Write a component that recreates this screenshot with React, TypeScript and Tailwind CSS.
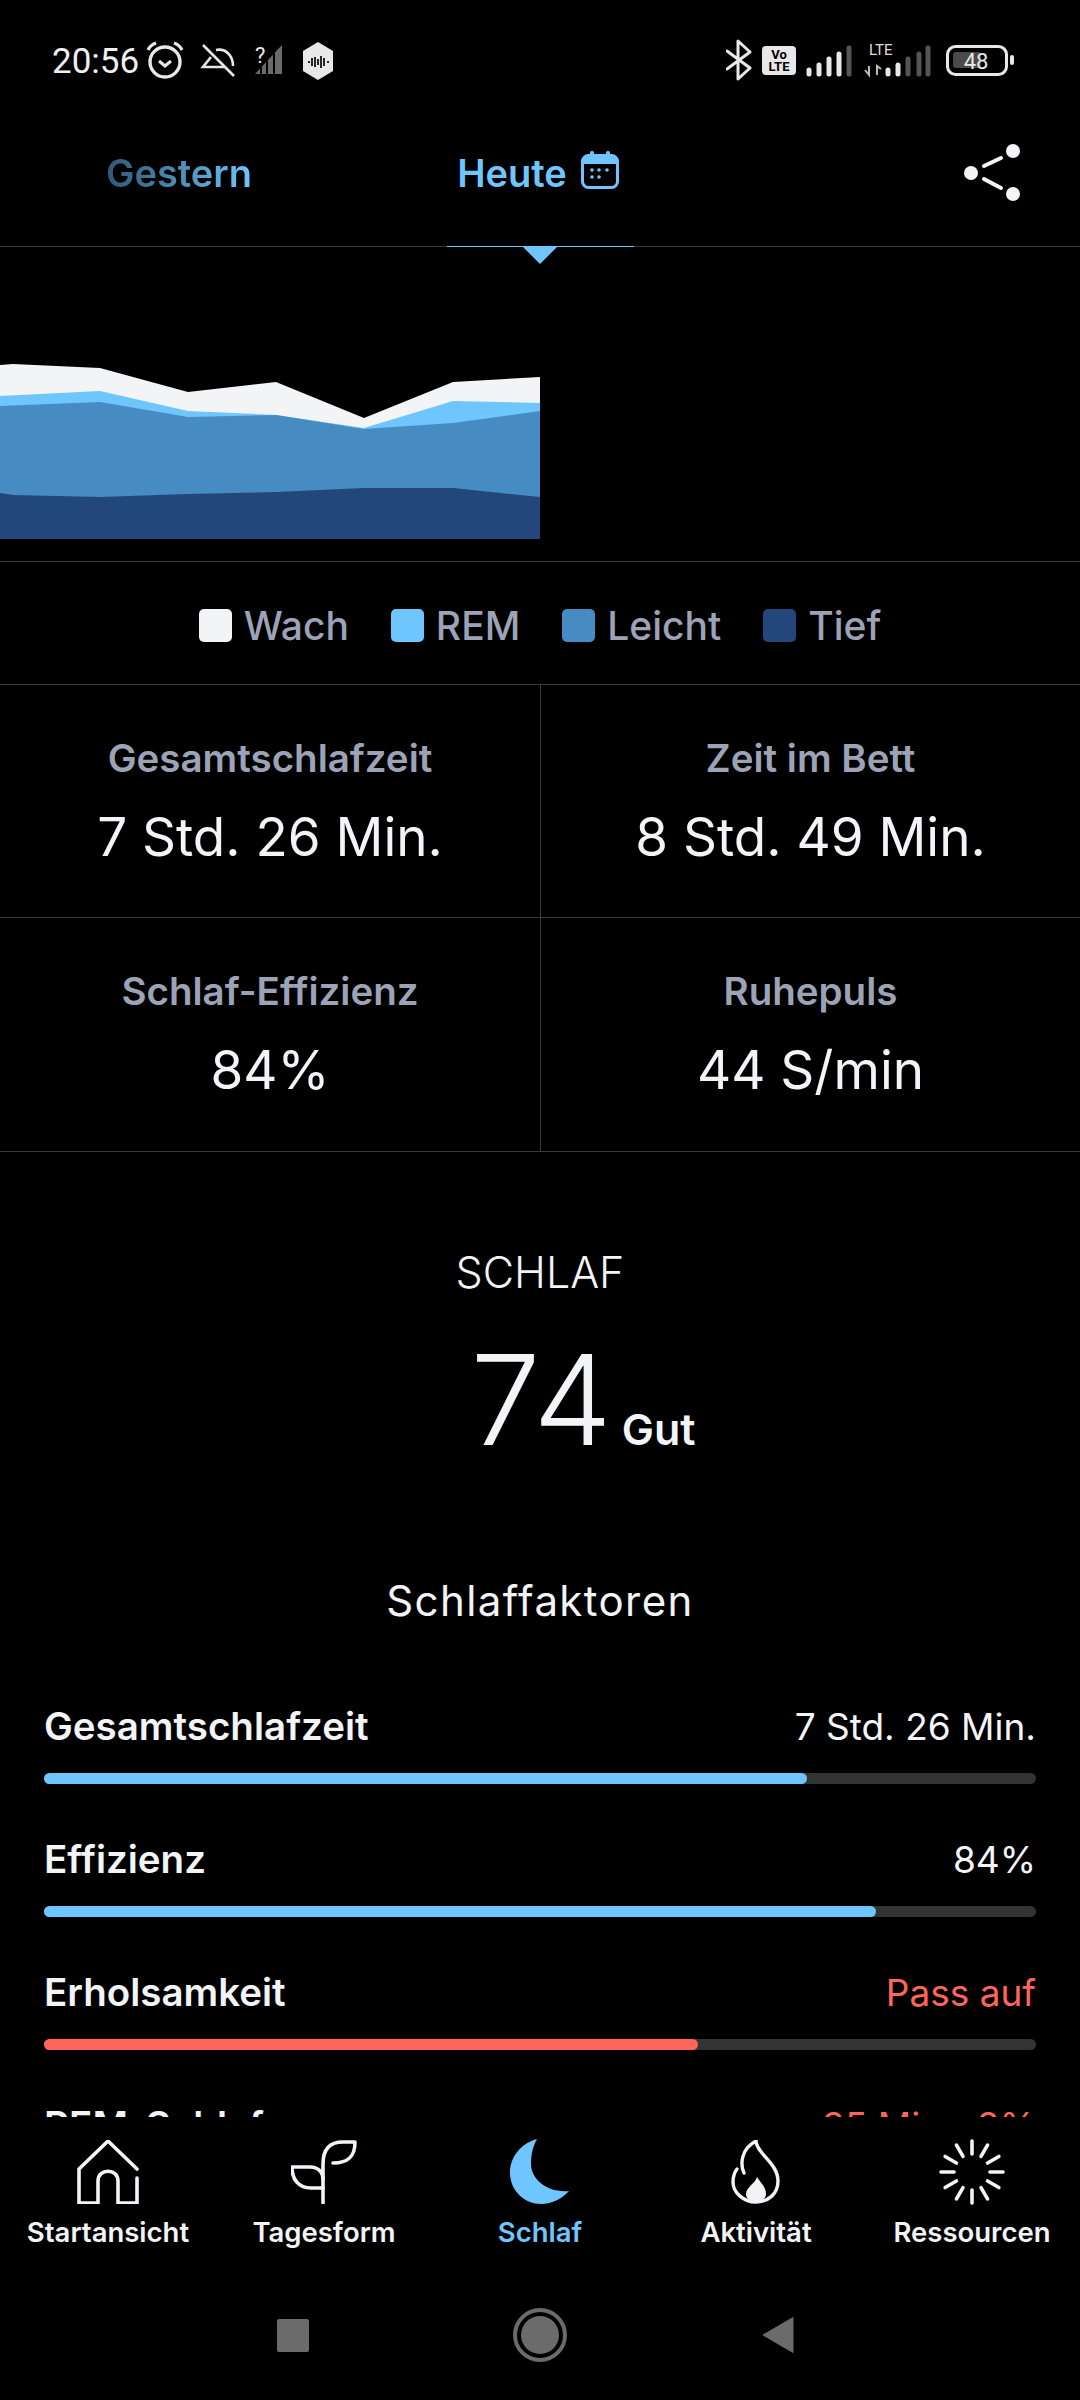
const FONT = "font-['Inter','Liberation_Sans',sans-serif]";

const FACTORS = [
  { label: "Gesamtschlafzeit", value: "7 Std. 26 Min.", fill: 763, bad: false },
  { label: "Effizienz", value: "84%", fill: 832, bad: false },
  { label: "Erholsamkeit", value: "Pass auf", fill: 654, bad: true },
  { label: "REM-Schlaf", value: "35 Min.\u2009·\u20098%", fill: 300, bad: true },
];

const STATS = [
  { label: "Gesamtschlafzeit", value: "7 Std. 26 Min." },
  { label: "Zeit im Bett", value: "8 Std. 49 Min." },
  { label: "Schlaf-Effizienz", value: "84%" },
  { label: "Ruhepuls", value: "44 S/min" },
];

const LEGEND = [
  { label: "Wach", color: "bg-[#f2f4f6]" },
  { label: "REM", color: "bg-[#6fc6ff]" },
  { label: "Leicht", color: "bg-[#468bc1]" },
  { label: "Tief", color: "bg-[#23477a]" },
];

// linke Statusbar-Icons
function StatusLeft() {
  return (
    <svg width="200" height="44" viewBox="0 0 200 44" className="ml-[6px]" fill="none" stroke="#e8e8e8">
      <circle cx="20" cy="23" r="15" strokeWidth="3.4" />
      <path d="M14 22l6 5 6-5" strokeWidth="3" />
      <path d="M3 11C5 7 8 5 11 4M37 11C35 7 32 5 29 4" strokeWidth="3.2" />
      <path d="M58 6l31 31" strokeWidth="2.6" />
      <path d="M71 11c10-2 17 6 17 16M66 18l-8 10h22" strokeWidth="2.6" />
      <text x="110" y="24" fill="#e8e8e8" stroke="none" fontSize="22" fontFamily="Roboto">?</text>
      <path d="M110 35l27-29v29z" fill="#6a6a6a" stroke="none" />
      <path d="M116 35v-8M122 35V20M129 35V12" stroke="#000" strokeWidth="2" />
      <path d="M173 3l15 9v20l-15 9-15-9V12z" fill="#e8e8e8" stroke="none" />
      <path d="M164 22v2M167 19v8M170 18v10M173 20v6M176 17v12M179 19v8M183 22v2" stroke="#111" strokeWidth="1.8" />
    </svg>
  );
}

function StatusRight() {
  return (
    <svg width="290" height="44" viewBox="0 0 290 44" fill="none">
      <path d="M1 12l23 17-12 11V2l12 11L1 30" stroke="#e8e8e8" strokeWidth="3" strokeLinejoin="round" strokeLinecap="round" />
      <rect x="36" y="7" width="34" height="29" rx="4" fill="#e8e8e8" />
      <text x="53" y="20" textAnchor="middle" fontSize="13" fontWeight="700" fontFamily="Roboto" fill="#000">Vo</text>
      <text x="53" y="32" textAnchor="middle" fontSize="13" fontWeight="700" fontFamily="Roboto" fill="#000">LTE</text>
      <g strokeWidth="5" strokeLinecap="round">
        <path d="M83 35v-4M93 35v-9M103 35v-15M113 35V15" stroke="#e8e8e8" />
        <path d="M123 35V9" stroke="#555" />
        <path d="M162 35v-4M172 35v-9" stroke="#e8e8e8" />
        <path d="M182 35v-15M193 35V15M202 35V9" stroke="#555" />
      </g>
      <path d="M143 27v9l-4-5M151 36v-9l4 3" stroke="#bbb" strokeWidth="2" />
      <text x="143" y="16" fontSize="15" fontFamily="Roboto" fill="#ddd">LTE</text>
      <rect x="221.5" y="7.5" width="59" height="28" rx="8" stroke="#e8e8e8" strokeWidth="3" />
      <rect x="227" y="13" width="28" height="16" rx="3" fill="#4a4a4a" />
      <text x="250" y="30" textAnchor="middle" fontSize="22" fontFamily="Roboto" fill="#e8e8e8">48</text>
      <rect x="284" y="16" width="4" height="10" rx="2" fill="#e8e8e8" />
    </svg>
  );
}

function StatusBar() {
  return (
    <div className="h-[120px] flex items-start justify-between pl-[52px] pr-[64px] pt-[39px]">
      <div className="flex items-center h-[44px]">
        <span className="font-['Roboto',sans-serif] text-[35px] leading-none text-[#efefef]">20:56</span>
        <StatusLeft />
      </div>
      <StatusRight />
    </div>
  );
}

function CalendarIcon() {
  return (
    <svg width="38" height="38" viewBox="0 0 38 38" fill="none" className="ml-[14px] -mt-[6px]">
      <rect x="1.5" y="4.5" width="35" height="32" rx="6" stroke="#6fc6ff" strokeWidth="3" />
      <path d="M3 6h32v7H3z" fill="#6fc6ff" />
      <rect x="9" y="0" width="4" height="7" rx="1.5" fill="#6fc6ff" />
      <rect x="25" y="0" width="4" height="7" rx="1.5" fill="#6fc6ff" />
      <g fill="#6fc6ff">
        <circle cx="11" cy="19" r="1.8" />
        <circle cx="18" cy="19" r="1.8" />
        <circle cx="26" cy="19" r="1.8" />
        <circle cx="11" cy="26" r="1.8" />
        <circle cx="18" cy="26" r="1.8" />
      </g>
    </svg>
  );
}

function ShareIcon() {
  return (
    <svg width="58" height="60" viewBox="0 0 58 60" fill="none">
      <circle cx="7" cy="30" r="7" fill="#f2f4f6" />
      <circle cx="49" cy="8" r="7" fill="#f2f4f6" />
      <circle cx="49" cy="51" r="7" fill="#f2f4f6" />
      <path d="M20 23l17-8M20 36l17 9" stroke="#f2f4f6" strokeWidth="4" strokeLinecap="round" />
    </svg>
  );
}

function Tabs() {
  return (
    <div className="relative h-[127px] border-b border-[#3a3a3a] shrink-0">
      <div className="flex items-center h-[106px] pr-[58px]">
        <div className="w-[358px] flex justify-center">
          <span className="text-[38px] font-semibold bg-gradient-to-r from-[#2f5873] to-[#6fc6ff] bg-clip-text text-transparent">Gestern</span>
        </div>
        <div className="w-[360px] flex justify-center items-center">
          <span className="text-[38px] font-semibold text-[#6fc6ff]">Heute</span>
          <CalendarIcon />
        </div>
        <div className="ml-auto">
          <ShareIcon />
        </div>
      </div>
      {/* aktiver Tab */}
      <div className="absolute left-[447px] -bottom-px w-[187px] h-px bg-[#6fc6ff]" />
      <svg width="34" height="17" viewBox="0 0 34 17" className="absolute left-[523px] top-[127px]">
        <path d="M0 0h34L17 17z" fill="#6fc6ff" />
      </svg>
    </div>
  );
}

function Chart() {
  return (
    <div className="h-[315px] border-b border-[#3a3a3a] shrink-0">
      <svg width="1080" height="314" viewBox="0 0 1080 314">
        <g transform="translate(0 -247)">
          <path d="M0 365L13 364L100 368L188 392L276 382L364 418L453 382L540 377V539H0Z" fill="#f2f4f6" />
          <path d="M0 396L100 391L188 411L276 415L364 428L453 401L540 403V539H0Z" fill="#6fc6ff" />
          <path d="M0 406L100 402L188 417L276 415L364 429L453 423L540 411V539H0Z" fill="#468bc1" />
          <path d="M0 493L13 495L100 497L188 494L276 492L364 488L453 488L540 497V539H0Z" fill="#23477a" />
        </g>
      </svg>
    </div>
  );
}

function Legend() {
  return (
    <div className="h-[123px] flex items-center justify-center gap-[42px] pt-[4px] border-b border-[#3a3a3a] shrink-0">
      {LEGEND.map((item) => (
        <div key={item.label} className="flex items-center gap-[12px]">
          <div className={`w-[33px] h-[33px] rounded-[5px] ${item.color}`} />
          <span className="text-[39px] font-medium text-[#9ca3b7] leading-none">{item.label}</span>
        </div>
      ))}
    </div>
  );
}

function Stats() {
  return (
    <div className="grid grid-cols-2 shrink-0">
      {STATS.map((s, i) => (
        <div
          key={s.label}
          className={`flex flex-col items-center pt-[49px] border-b border-[#3a3a3a] ${i < 2 ? "h-[233px]" : "h-[234px]"} ${i % 2 === 1 ? "border-l" : ""}`}
        >
          <span className="text-[38.5px] font-semibold text-[#9ca3b7] leading-[48px]">{s.label}</span>
          <span className="text-[53px] text-[#f2f4f6] leading-[64px] mt-[23px]">{s.value}</span>
        </div>
      ))}
    </div>
  );
}

function Score() {
  return (
    <div className="flex flex-col items-center pt-[95px] shrink-0">
      <span className="text-[43px] leading-[50px] font-light text-[#f2f4f6]">SCHLAF</span>
      <div className="flex items-baseline gap-[10px] ml-[86px] mt-[48px] h-[110px]">
        <span className="text-[125px] font-light leading-[110px] text-[#f2f4f6]">74</span>
        <span className="text-[43px] font-semibold text-[#f2f4f6]">Gut</span>
      </div>
      <span className="text-[42px] leading-[50px] tracking-[1.4px] text-[#f2f4f6] mt-[121px]">Schlaffaktoren</span>
    </div>
  );
}

function Factors() {
  return (
    <div className="px-[44px] pt-[79px] flex flex-col gap-[54px]">
      {FACTORS.map((f) => (
        <div key={f.label}>
          <div className="flex justify-between items-center h-[44px]">
            <span className="text-[38.5px] font-semibold text-[#f2f4f6]">{f.label}</span>
            <span className={`text-[37px] ${f.bad ? "text-[#ff6659]" : "text-[#f2f4f6]"}`}>{f.value}</span>
          </div>
          <div className="h-[11px] rounded-full bg-[#333] mt-[24px]">
            <div
              className={`h-full rounded-full ${f.bad ? "bg-[#ff6659]" : "bg-[#6fc6ff]"}`}
              style={{ width: f.fill }}
            />
          </div>
        </div>
      ))}
    </div>
  );
}

function HomeIcon() {
  return (
    <svg width="64" height="64" viewBox="0 0 64 64" fill="none" stroke="#f2f4f6" strokeWidth="3.6" strokeLinejoin="round" strokeLinecap="round">
      <path d="M61 29L32 1 3 29v34h19V41c0-13 20-13 20 0v22h19V38" />
    </svg>
  );
}

function LeafIcon() {
  return (
    <svg width="66" height="64" viewBox="0 0 66 64" fill="none" stroke="#f2f4f6" strokeWidth="3.6" strokeLinejoin="round" strokeLinecap="round">
      <path d="M32 63V24C32 8 40 2 52 2h12c0 14-6 21-22 21" />
      <path d="M32 48H20C8 48 1 40 1 27h18c8 0 13 5 13 12" />
    </svg>
  );
}

function MoonIcon() {
  return (
    <svg width="60" height="66" viewBox="0 0 60 66" fill="#6fc6ff">
      <path d="M27 0C12 4 0 17 0 34c0 18 15 31 31 31 11 0 22-6 28-13-22 2-38-12-38-27 0-10 2-18 6-25z" />
    </svg>
  );
}

function FlameIcon() {
  return (
    <svg width="50" height="64" viewBox="0 0 50 64" fill="none">
      <path d="M13 33C9 24 10 9 25 1c0 12 22 22 22 40 0 13-10 21-22 21S2 53 2 42c0-5 1-9 4-13" stroke="#f2f4f6" strokeWidth="3.4" strokeLinecap="round" />
      <path d="M26 37c3 5 9 10 9 17 0 4-3 7-10 7s-10-3-10-7c0-7 9-10 11-17z" fill="#f2f4f6" />
    </svg>
  );
}

function SpinnerIcon() {
  const spokes = Array.from({ length: 12 }, (_, i) => i * 30);
  return (
    <svg width="66" height="66" viewBox="-33 -33 66 66" stroke="#f2f4f6" strokeWidth="3.6" strokeLinecap="round">
      {spokes.map((deg) => (
        <line key={deg} x1="0" y1="-18" x2="0" y2="-31" transform={`rotate(${deg})`} />
      ))}
    </svg>
  );
}

const NAV = [
  { label: "Startansicht", icon: <HomeIcon /> },
  { label: "Tagesform", icon: <LeafIcon /> },
  { label: "Schlaf", icon: <MoonIcon />, active: true },
  { label: "Aktivität", icon: <FlameIcon /> },
  { label: "Ressourcen", icon: <SpinnerIcon /> },
];

function BottomNav() {
  return (
    <div className="grid grid-cols-5 bg-black h-[163px] pt-[22px] shrink-0">
      {NAV.map((n) => (
        <div key={n.label} className="flex flex-col items-center">
          <div className="h-[66px] flex items-center">{n.icon}</div>
          <span className={`text-[27.5px] font-semibold leading-[34px] mt-[10px] ${n.active ? "text-[#6fc6ff]" : "text-[#f2f4f6]"}`}>
            {n.label}
          </span>
        </div>
      ))}
    </div>
  );
}

function SystemNav() {
  return (
    <div className="flex-1 flex items-center justify-center pb-[10px] pr-[9px]">
      <div className="w-[32px] h-[33px] rounded-[2px] bg-[#6b6b6b]" />
      <div className="ml-[204px] w-[54px] h-[54px] rounded-full border-[4px] border-[#6b6b6b] flex items-center justify-center">
        <div className="w-[38px] h-[38px] rounded-full bg-[#6b6b6b]" />
      </div>
      <svg width="32" height="38" viewBox="0 0 32 38" className="ml-[195px]">
        <path d="M31 1.5v35L1 19z" fill="#6b6b6b" stroke="#6b6b6b" strokeWidth="1" strokeLinejoin="round" />
      </svg>
    </div>
  );
}

export default function App() {
  return (
    <div className={`w-[1080px] h-[2400px] bg-black flex flex-col overflow-hidden ${FONT}`}>
      <StatusBar />
      <Tabs />
      <Chart />
      <Legend />
      <Stats />
      <div className="h-[965px] overflow-hidden shrink-0">
        <Score />
        <Factors />
      </div>
      <BottomNav />
      <SystemNav />
    </div>
  );
}
